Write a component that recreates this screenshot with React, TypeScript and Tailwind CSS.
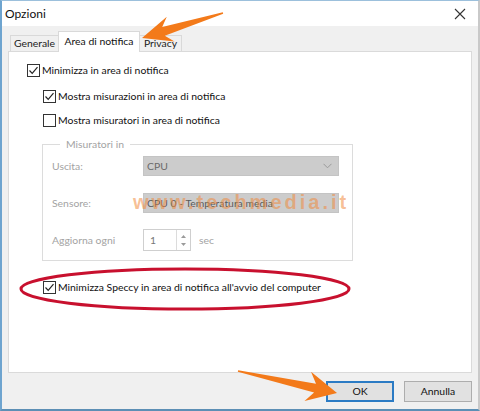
import React from 'react';

type Pt = [number, number];

// tapered arrow polygon from tail to tip
function arrowPoints(tail: Pt, tip: Pt, headLen: number, headW: number, tailW: number, baseW: number) {
  const dx = tip[0] - tail[0];
  const dy = tip[1] - tail[1];
  const len = Math.hypot(dx, dy);
  const ux = dx / len;
  const uy = dy / len;
  const nx = -uy;
  const ny = ux;
  const bx = tip[0] - ux * headLen;
  const by = tip[1] - uy * headLen;
  const nbx = tip[0] - ux * headLen * 0.75;
  const nby = tip[1] - uy * headLen * 0.75;
  const pts: Pt[] = [
    tip,
    [bx + nx * headW / 2, by + ny * headW / 2],
    [nbx + nx * baseW / 2, nby + ny * baseW / 2],
    [tail[0] + nx * tailW / 2, tail[1] + ny * tailW / 2],
    [tail[0] - nx * tailW / 2, tail[1] - ny * tailW / 2],
    [nbx - nx * baseW / 2, nby - ny * baseW / 2],
    [bx - nx * headW / 2, by - ny * headW / 2],
  ];
  return pts.map((p) => `${p[0].toFixed(1)},${p[1].toFixed(1)}`).join(' ');
}

const Check = ({ checked }: { checked: boolean }) => (
  <span className="w-[13px] h-[13px] border border-[#333] bg-white flex items-center justify-center shrink-0">
    {checked && (
      <svg width="11" height="11" viewBox="0 0 11 11">
        <path d="M1.5 5.5 L4.2 8.3 L9.5 2.2" fill="none" stroke="#222" strokeWidth="1.2" />
      </svg>
    )}
  </span>
);

const CheckRow = ({ checked, label, className = '' }: { checked: boolean; label: string; className?: string }) => (
  <div className={`flex items-center gap-[2px] whitespace-nowrap ${className}`}>
    <Check checked={checked} />
    <span className="text-[#111] leading-none">{label}</span>
  </div>
);

const Chevron = () => (
  <svg width="9" height="6" viewBox="0 0 9 6" className="ml-auto">
    <path d="M0.5 0.8 L4.5 4.8 L8.5 0.8" fill="none" stroke="#9a9a9a" strokeWidth="1" />
  </svg>
);

export default function App() {
  return (
    <div className="relative w-[480px] h-[411px] bg-[#f0f0f0] border-l-2 border-t border-b-2 border-r-2 border-l-[#6ea4cf] border-t-[#9cc0dc] border-b-[#5c8fb5] border-r-[#c9c9c9] font-['Lato','Noto_Sans',sans-serif] text-[10.4px] overflow-hidden flex flex-col">
      {/* title bar */}
      <div className="h-[25px] bg-white flex items-center px-[3px] shrink-0">
        <span className="text-[12px] text-[#111]">Opzioni</span>
        <svg width="12" height="12" viewBox="0 0 12 12" className="ml-auto mr-[9px]">
          <path d="M1 1 L11 11 M11 1 L1 11" stroke="#333" strokeWidth="1.1" />
        </svg>
      </div>

      <div className="pl-[6px] pr-[6px] pt-[5px] flex flex-col flex-1">
        {/* tabs */}
        <div className="flex items-end h-[20px] pl-[2px] whitespace-nowrap">
          <div className="h-[16px] w-[49px] border border-[#d9d9d9] border-b-0 bg-[#f0f0f0] flex items-center justify-center text-[#222]">Generale</div>
          <div className="h-[21px] w-[82px] -ml-[1px] border border-[#d9d9d9] border-b-0 bg-white flex items-center justify-center text-[#111] relative z-10 -mb-[1px]">Area di notifica</div>
          <div className="h-[16px] w-[43px] -ml-[1px] border border-[#d9d9d9] border-b-0 bg-[#f0f0f0] flex items-center justify-center text-[#222]">Privacy</div>
        </div>

        {/* tab panel */}
        <div className="h-[322px] bg-white border border-[#dadada] flex flex-col pl-[18px] pt-[12px]">
          <CheckRow checked label="Minimizza in area di notifica" />
          <CheckRow checked label="Mostra misurazioni in area di notifica" className="ml-[16px] mt-[13px]" />
          <CheckRow checked={false} label="Mostra misuratori in area di notifica" className="ml-[16px] mt-[11px]" />

          <fieldset className="ml-[15px] mt-[12px] w-[311px] h-[122px] border border-[#dcdcdc] pl-[9px] pr-[13px] text-[#a3a3a3]">
            <legend className="ml-[8px] px-[6px] leading-none">Misuratori in</legend>
            <div className="flex items-center mt-[7px] h-[20px]">
              <span className="w-[91px]">Uscita:</span>
              <div className="flex-1 h-[20px] bg-[#cccccc] border border-[#c4c4c4] flex items-center pl-[3px] pr-[6px] text-[#6a6a6a]">
                CPU
                <Chevron />
              </div>
            </div>
            <div className="flex items-center mt-[17px] h-[20px]">
              <span className="w-[91px]">Sensore:</span>
              <div className="flex-1 h-[20px] bg-[#cccccc] border border-[#c4c4c4] flex items-center pl-[3px] pr-[6px] text-[#5a5a5a]">
                CPU 0 - Temperatura media
              </div>
            </div>
            <div className="flex items-center mt-[16px] h-[22px]">
              <span className="w-[91px]">Aggiorna ogni</span>
              <div className="w-[48px] h-[22px] bg-white border border-[#cfcfcf] flex">
                <span className="flex-1 pl-[6px] flex items-center text-[#777]">1</span>
                <div className="w-[14px] border-l border-[#dcdcdc] flex flex-col items-center justify-center gap-[5px]">
                  <svg width="5" height="3" viewBox="0 0 5 3"><path d="M0 3 L2.5 0 L5 3 Z" fill="#9a9a9a" /></svg>
                  <svg width="5" height="3" viewBox="0 0 5 3"><path d="M0 0 L2.5 3 L5 0 Z" fill="#9a9a9a" /></svg>
                </div>
              </div>
              <span className="ml-[8px]">sec</span>
            </div>
          </fieldset>

          <CheckRow checked label="Minimizza Speccy in area di notifica all'avvio del computer" className="ml-[16px] mt-[20px]" />
        </div>

        {/* buttons */}
        <div className="flex justify-end gap-[10px] mt-[8px]">
          <button className="w-[68px] h-[21px] bg-[#e1e1e1] border-2 border-[#2b7bc4] text-[#111]">OK</button>
          <button className="w-[68px] h-[21px] bg-[#e1e1e1] border border-[#adadad] text-[#111]">Annulla</button>
        </div>
      </div>

      {/* watermark */}
      <div className="absolute left-[131px] top-[186px] text-[20px] font-bold tracking-[3px] text-[#f08a3c]/55 font-['Liberation_Sans',sans-serif] pointer-events-none">
        www.techmedia.it
      </div>

      {/* annotations */}
      <svg className="absolute left-[-2px] top-[-1px] pointer-events-none" width="480" height="411" viewBox="0 0 480 411">
        <ellipse cx="185" cy="289" rx="164" ry="20" fill="none" stroke="#c8102e" strokeWidth="3" />
        <polygon points={arrowPoints([223, 13], [142, 38], 30, 26, 1.5, 9)} fill="#f37a1a" />
        <polygon points={arrowPoints([238, 371], [337, 393], 30, 30, 1.5, 9)} fill="#f37a1a" />
      </svg>
    </div>
  );
}
